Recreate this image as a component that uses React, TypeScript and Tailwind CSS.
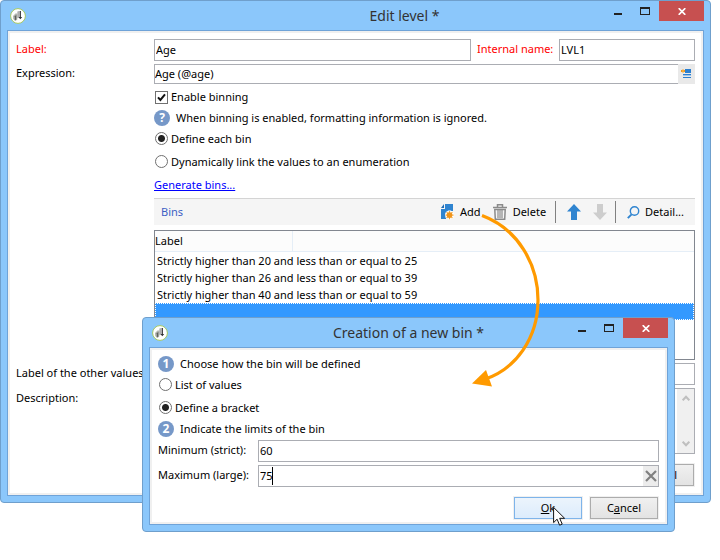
import type { ReactNode } from "react";

const ROWS = [
  "Strictly higher than 20 and less than or equal to 25",
  "Strictly higher than 26 and less than or equal to 39",
  "Strictly higher than 40 and less than or equal to 59",
];

const FIELD = "h-[22px] w-full min-w-0 border border-[#abadb3] bg-white px-[1px] pb-[2px] outline-none";
const RADIO =
  "size-[13px] shrink-0 appearance-none rounded-full border border-[#707070] bg-white checked:bg-[radial-gradient(circle,#222_0,#222_3px,transparent_4px)]";
const BUTTON =
  "h-[22px] w-[68px] border border-[#acacac] bg-linear-to-b from-[#f0f0f0] to-[#e3e3e3] text-center shadow-[0_0_0_1px_#f0f0f0]";

function AppLogo() {
  return (
    <svg className="size-4 shrink-0" viewBox="0 0 16 16" aria-hidden="true">
      <circle cx="8" cy="8" r="7.4" fill="#fff" stroke="#a5c860" strokeWidth="1" />
      <path d="M3 8 5.800 5.200l1.500.5v5.800L5.400 13 3.200 11z" fill="#b4b7b0" />
      <path d="M4.800 8.200 6.300 6.800v4.600l-1.500 1z" fill="#5f625c" />
      <path d="M7.600 3.400 8.600 3v6.400l-1 .6z" fill="#777" />
      <path d="M9.600 3h1.300v6h1.300L10.300 11.300 8.400 9h1.200z" fill="#333" />
    </svg>
  );
}

function TitleBar({ title, className }: { title: string; className: string }) {
  return (
    <header className="relative flex h-[29px] items-center pl-[3px]">
      <AppLogo />
      <h1 className={"absolute inset-x-0 top-0 text-center font-normal leading-[29px] text-[14px] text-[#333] " + className}>
        {title}
      </h1>
      <div className="relative ml-auto flex h-5 self-start">
        <button aria-label="Minimize" className="flex w-[26px] items-center justify-center">
          <svg width="10" height="10" viewBox="0 0 10 10"><path d="M1 7h8v2H1z" fill="#222" /></svg>
        </button>
        <button aria-label="Maximize" className="flex w-[28px] items-center justify-center">
          <svg width="10" height="8" viewBox="0 0 10 8"><path d="M0 0h10v8H0zM1 2v5h8V2z" fillRule="evenodd" fill="#222" /></svg>
        </button>
        <button aria-label="Close" className="flex w-[45px] items-center justify-center bg-[#c75050]">
          <svg width="8" height="7" viewBox="0 0 8 7"><path d="M.7.2l6.600 6.600M7.300.2.7 6.800" stroke="#fff" strokeWidth="1.7" /></svg>
        </button>
      </div>
    </header>
  );
}

function Badge({ children }: { children: ReactNode }) {
  return (
    <span className="flex size-4 shrink-0 items-center justify-center rounded-full bg-[#7698c8] text-[12px] font-bold leading-none text-white">
      {children}
    </span>
  );
}

function EditWindow() {
  return (
    <section className="rounded-[4px] border border-[#6f9fcc] bg-[#8bc7fb] px-[6px] pb-[6px]">
      <TitleBar title="Edit level *" className="pl-[98px]" />
      <form className="border border-[#6fa3d8] bg-white p-[2px] shadow-[inset_0_0_0_2px_#f0f0f0]">
        <div className="grid grid-cols-[138px_minmax(0,1fr)] gap-y-[3px] pt-[6px] pr-[6px] pb-[7px] pl-[6px]">
          <label htmlFor="label" className="leading-[20px] text-[#f00]">Label:</label>
          <div className="flex">
            <input id="label" defaultValue="Age" className={FIELD} />
            <label htmlFor="internal" className="w-[88px] shrink-0 pl-[6px] leading-[20px] text-[#f00]">Internal name:</label>
            <div className="w-[136px] shrink-0">
              <input id="internal" defaultValue="LVL1" className={FIELD} />
            </div>
          </div>

          <label htmlFor="expression" className="leading-[18px]">Expression:</label>
          <div className="flex h-5">
            <input
              id="expression"
              defaultValue="Age (@age)"
              className="h-5 min-w-0 flex-1 border border-r-0 border-[#abadb3] bg-white px-0 pb-[2px] outline-none"
            />
            <button type="button" aria-label="Edit expression" className="flex w-[17px] items-center justify-center bg-[#e9e9e9]">
              <svg width="11" height="10" viewBox="0 0 11 10">
                <path d="M4 0h6v4H4z" fill="#2b7fd0" />
                <path d="M2 5h8v1H2zM2 8h8v1H2z" fill="#2b7fd0" />
                <path d="M2 6h8v1H2z" fill="#9cc4ea" />
                <path d="M0 1h4v2H0z" fill="#f09a1a" />
                <path d="M1 0h2v4H1z" fill="#f7b95c" opacity=".6" />
              </svg>
            </button>
          </div>

          <div className="col-start-2 -mt-[3px]">
            <label className="flex h-[26px] items-center gap-[3px] pl-[1px]">
              <span className="grid size-[13px]">
                <input type="checkbox" defaultChecked className="peer col-start-1 row-start-1 size-[13px] appearance-none border border-[#707070] bg-white" />
                <svg className="invisible col-start-1 row-start-1 size-[13px] peer-checked:visible" viewBox="0 0 13 13">
                  <path d="M3 6.300 5.400 9 10 3.400" fill="none" stroke="#111" strokeWidth="2" />
                </svg>
              </span>
              Enable binning
            </label>
            <p className="flex h-4 items-center gap-[6px]">
              <Badge>?</Badge>
              When binning is enabled, formatting information is ignored.
            </p>
            <div className="pt-[1px]">
              <label className="flex h-[23px] items-center gap-[3px] pl-[1px]">
                <input type="radio" name="mode" defaultChecked className={RADIO} />
                Define each bin
              </label>
              <label className="flex h-[23px] items-center gap-[3px] pl-[1px]">
                <input type="radio" name="mode" className={RADIO} />
                Dynamically link the values to an enumeration
              </label>
            </div>
            <div className="flex h-[24px] items-center">
              <a href="#bins" className="text-[#00f] underline">Generate bins...</a>
            </div>

            <div id="bins" className="mt-[1px] flex h-[27px] items-center border-t border-[#d4d4d4] bg-[#f5f5f5] pr-[11px] pl-[7px]">
              <h2 className="mr-auto font-normal text-[#3c5fc4]">Bins</h2>
              <button type="button" className="flex items-center gap-[5px]">
                <svg width="14" height="16" viewBox="0 0 14 16">
                  <path d="M4 0h8v7H8L5 10v5H0V5h4z" fill="#2f84d0" />
                  <path d="M0 4 3 0v4z" fill="#1f6cb5" />
                  <path d="M8.500 6.600v9M4 11.100h9M5.300 7.900l6.400 6.400M11.700 7.900l-6.400 6.400" stroke="#fff" strokeWidth="3" />
                  <path d="M8.500 7v8.200M4.400 11.100h8.200M5.600 8.200l5.800 5.800M11.400 8.200l-5.800 5.800" stroke="#f3ab45" strokeWidth="1.200" />
                  <circle cx="8.500" cy="11.100" r="2.800" fill="#f0941a" />
                </svg>
                Add
              </button>
              <button type="button" className="ml-[12px] flex items-center gap-[6px]">
                <svg width="14" height="16" viewBox="0 0 14 16" fill="none" stroke="#8a8a8a">
                  <path d="M4.500 3V.8h5V3M0 3.600h14" strokeWidth="1.500" />
                  <path d="M1.800 5.500 2.300 15.200h9.400l.5-9.700z" strokeWidth="1.500" />
                  <path d="M5 6v8M7 6v8M9 6v8" strokeWidth="1.200" />
                </svg>
                Delete
              </button>
              <span className="mr-[11px] ml-[9px] h-[22px] w-px bg-[#808080]" />
              <button type="button" aria-label="Move up">
                <svg width="14" height="16" viewBox="0 0 14 16"><path d="M7 0l7 7.500H10V16H4V7.500H0z" fill="#2f84d0" /></svg>
              </button>
              <button type="button" aria-label="Move down" className="ml-[12px]">
                <svg width="14" height="16" viewBox="0 0 14 16"><path d="M7 16l7-7.500H10V0H4v8.500H0z" fill="#cdcdcd" /></svg>
              </button>
              <span className="mr-[11px] ml-[8px] h-[22px] w-px bg-[#808080]" />
              <button type="button" className="flex items-center gap-[5px]">
                <svg width="13" height="13" viewBox="0 0 13 13" fill="none" stroke="#2f84d0">
                  <circle cx="7.500" cy="5" r="4.200" strokeWidth="1.400" />
                  <path d="M4.600 8.400.8 12.200" strokeWidth="1.900" />
                </svg>
                Detail...
              </button>
            </div>

            <div className="mt-[5px] h-[130px] border border-[#828790]">
              <table className="w-full border-separate border-spacing-0 text-left">
                <thead className="bg-[#fcfcfc]">
                  <tr className="h-[21px]">
                    <th className="w-[138px] border-r border-b border-[#e5eef7] p-0 font-normal leading-[20px]">Label</th>
                    <th className="border-b border-[#e5eef7] p-0" />
                  </tr>
                </thead>
                <tbody>
                  {ROWS.map((row) => (
                    <tr key={row} className="h-[17px]">
                      <td colSpan={2} className="p-0 pl-[2px] leading-[17px]">{row}</td>
                    </tr>
                  ))}
                  <tr className="h-[17px]">
                    <td colSpan={2} className="border border-dotted border-white bg-[#3399ff] p-0" />
                  </tr>
                </tbody>
              </table>
            </div>
          </div>

          <label htmlFor="other" className="whitespace-nowrap leading-[20px]">Label of the other values:</label>
          <input id="other" className={FIELD} />

          <label htmlFor="description" className="leading-[20px]">Description:</label>
          <div className="flex h-[66px] border border-[#abadb3]">
            <textarea id="description" className="min-w-0 flex-1 resize-none outline-none" />
            <div className="flex w-[17px] flex-col items-center justify-between bg-[#f0f0f0] py-[6px]">
              <svg width="8" height="6" viewBox="0 0 8 6"><path d="M.7 5.300 4 1.700l3.300 3.600" fill="none" stroke="#bfbfbf" strokeWidth="2" /></svg>
              <svg width="8" height="6" viewBox="0 0 8 6"><path d="M.7.7 4 4.300 7.300.7" fill="none" stroke="#bfbfbf" strokeWidth="2" /></svg>
            </div>
          </div>

          <div className="col-span-2 flex justify-end gap-[8px] pt-[7px] pr-[1px]">
            <button type="button" className={BUTTON}><u>O</u>k</button>
            <button type="button" className={BUTTON}>C<u>a</u>ncel</button>
          </div>
        </div>
      </form>
    </section>
  );
}

function BinDialog() {
  return (
    <section
      role="dialog"
      aria-label="Creation of a new bin"
      className="absolute top-[317px] right-[45px] left-[142px] rounded-[4px] border border-[#6f9fcc] bg-[#8bc7fb] px-[6px] pb-[6px]"
    >
      <TitleBar title="Creation of a new bin *" className="" />
      <form className="border border-[#6fa3d8] bg-white p-[2px] shadow-[inset_0_0_0_2px_#f0f0f0]">
        <div className="pt-[6px] pr-[6px] pb-[3px] pl-[6px]">
          <p className="flex h-4 items-center gap-[6px]"><Badge>1</Badge>Choose how the bin will be defined</p>
          <div className="pt-[1px] pb-[2px]">
            <label className="flex h-[23px] items-center gap-[3px] pl-[1px]">
              <input type="radio" name="kind" className={RADIO} />
              List of values
            </label>
            <label className="flex h-[23px] items-center gap-[3px] pl-[1px]">
              <input type="radio" name="kind" defaultChecked className={RADIO} />
              Define a bracket
            </label>
          </div>
          <p className="flex h-4 items-center gap-[6px]"><Badge>2</Badge>Indicate the limits of the bin</p>
          <div className="mt-[3px] grid grid-cols-[100px_minmax(0,1fr)] gap-y-[3px]">
            <label htmlFor="min" className="leading-[20px]">Minimum (strict):</label>
            <input id="min" defaultValue="60" className={FIELD} />
            <label htmlFor="max" className="leading-[20px]">Maximum (large):</label>
            <div className="relative flex">
              <input id="max" defaultValue="75" className={FIELD + " border-r-0"} />
              <span className="absolute top-[2px] left-[14px] h-[18px] w-px bg-black" />
              <button type="button" aria-label="Clear" className="flex h-[22px] w-[16px] shrink-0 items-center justify-center border-y border-r border-[#abadb3] bg-[#ececec]">
                <svg width="12" height="12" viewBox="0 0 12 12"><path d="M1 1l10 10M11 1 1 11" stroke="#808080" strokeWidth="2.200" /></svg>
              </button>
            </div>
          </div>
          <div className="mt-[10px] flex justify-end gap-[8px] pr-[1px]">
            <button
              type="button"
              className="h-[22px] w-[68px] border border-[#7eb4ea] bg-linear-to-b from-[#ecf4fc] to-[#dcecfc] text-center shadow-[0_0_0_1px_#f0f0f0]"
            >
              <u>O</u>k
            </button>
            <button type="button" className={BUTTON}>C<u>a</u>ncel</button>
          </div>
        </div>
      </form>
    </section>
  );
}

export default function App() {
  return (
    <main className="relative min-h-[560px] bg-white pr-[9px] font-['Noto_Sans','Open_Sans',sans-serif] text-[11px] leading-[16px] text-black">
      <EditWindow />
      <BinDialog />
      <svg className="pointer-events-none absolute top-[200px] left-[460px]" width="90" height="200" viewBox="460 200 90 200" aria-hidden="true">
        <path d="M482 215.500C518 229 538 264 538 300c0 38-22 69-54 79.500" fill="none" stroke="#ff9a00" strokeWidth="3.200" />
        <path d="M472 383.500 486 370l6 16.500z" fill="#ff9a00" />
      </svg>
      <svg className="pointer-events-none absolute top-[506px] left-[553px]" width="13" height="21" viewBox="0 0 13 21" aria-hidden="true">
        <path d="M.6 1.400v15.200l3.500-3.400 2.500 6 2.600-1.100-2.500-5.800h4.900z" fill="#fff" stroke="#111" strokeWidth="1" />
      </svg>
    </main>
  );
}
